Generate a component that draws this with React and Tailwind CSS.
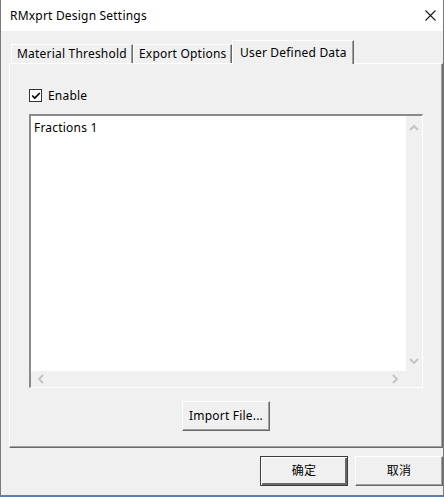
import { Check } from 'lucide-react';

const font = "font-['Noto_Sans','Noto_Sans_CJK_SC',sans-serif]";

function Chevron({ dir }) {
  const paths = {
    up: 'M1 6 L5 2 L9 6',
    down: 'M1 2 L5 6 L9 2',
    left: 'M6 1 L2 5 L6 9',
    right: 'M2 1 L6 5 L2 9',
  };
  const vertical = dir === 'up' || dir === 'down';
  return (
    <svg
      width={vertical ? 10 : 8}
      height={vertical ? 8 : 10}
      viewBox={vertical ? '0 0 10 8' : '0 0 8 10'}
      className="block"
    >
      <path d={paths[dir]} fill="none" stroke="#c2c2c2" strokeWidth="1.8" />
    </svg>
  );
}

function Tab({ label, selected, width }) {
  if (selected) {
    return (
      <div className={`relative z-10 -mb-px flex h-[24px] items-center border-l border-t border-r border-l-white border-t-white border-r-[#696969] bg-[#f0f0f0] pl-[7px] shadow-[inset_-1px_0_0_#a0a0a0] ${width}`}>
        {label}
      </div>
    );
  }
  return (
    <div className={`flex h-[19px] items-center border-l border-t border-r border-l-white border-t-white border-r-[#696969] bg-[#f0f0f0] pl-[5px] shadow-[inset_-1px_0_0_#a0a0a0] ${width}`}>
      {label}
    </div>
  );
}

function Button({ children, primary, className = '' }) {
  return (
    <button
      className={`flex h-[30px] w-[88px] items-center justify-center bg-[#f0f0f0] text-[12px] text-black ${
        primary
          ? 'border border-[#3c3c3c] shadow-[inset_1px_1px_0_#ffffff,inset_-2px_-2px_0_#696969]'
          : 'border border-t-white border-l-white border-r-[#696969] border-b-[#696969] shadow-[inset_-1px_-1px_0_#a0a0a0]'
      } ${className}`}
    >
      {children}
    </button>
  );
}

export default function App() {
  return (
    <div className={`${font} flex h-[497px] w-[444px] flex-col text-[12px] tracking-[0.2px] text-black`}>
      <div className="flex h-[496px] w-[444px] flex-col border-l border-r border-b border-[#7a7a7a]">
        {/* Title bar */}
        <div className="flex h-[31px] items-center justify-between bg-white pl-[9px] pr-[7px]">
          <span>RMxprt Design Settings</span>
          <svg width="11" height="11" viewBox="0 0 11 11">
            <path d="M0.5 0.5 L10.5 10.5 M10.5 0.5 L0.5 10.5" stroke="#1a1a1a" strokeWidth="1.1" />
          </svg>
        </div>

        {/* Body */}
        <div className="flex flex-1 flex-col bg-[#f0f0f0] pl-[8px] pt-[9px]">
          {/* Tabs */}
          <div className="flex items-end pl-[2px]">
            <Tab label="Material Threshold" width="w-[122px]" />
            <Tab label="Export Options" width="w-[99px]" />
            <Tab label="User Defined Data" width="w-[122px]" selected />
          </div>

          {/* Tab panel */}
          <div className="flex h-[385px] flex-col border border-t-white border-l-white border-r-[#696969] border-b-[#696969] pl-[19px] pr-[19px] pt-[25px] shadow-[inset_-1px_-1px_0_#a0a0a0]">
            <label className="flex h-[13px] items-center gap-[6px]">
              <span className="flex h-[13px] w-[13px] items-center justify-center border border-[#333333] bg-white">
                <Check className="h-[10px] w-[10px]" strokeWidth={4} color="#000" />
              </span>
              <span>Enable</span>
            </label>

            {/* List box */}
            <div className="mt-[12px] flex h-[274px] flex-col border-t-2 border-l-2 border-t-[#8a8a8a] border-l-[#8a8a8a] border-b border-r border-b-white border-r-white">
              <div className="flex flex-1">
                <div className="flex-1 bg-white pl-[3px] pt-[3px] leading-[17px]">Fractions 1</div>
                <div className="flex w-[16px] flex-col items-center justify-between pb-[6px] pt-[8px]">
                  <Chevron dir="up" />
                  <Chevron dir="down" />
                </div>
              </div>
              <div className="flex h-[16px] items-center">
                <div className="flex flex-1 items-center justify-between pl-[6px] pr-[7px]">
                  <Chevron dir="left" />
                  <Chevron dir="right" />
                </div>
                <div className="w-[16px]" />
              </div>
            </div>

            <div className="mt-[13px] flex justify-center">
              <Button>Import File...</Button>
            </div>
          </div>

          {/* Dialog buttons */}
          <div className="mt-[8px] flex justify-end gap-[7px]">
            <Button primary>确定</Button>
            <Button>取消</Button>
          </div>
        </div>
      </div>
      <div className="h-px bg-[#5a7fa8]" />
    </div>
  );
}
